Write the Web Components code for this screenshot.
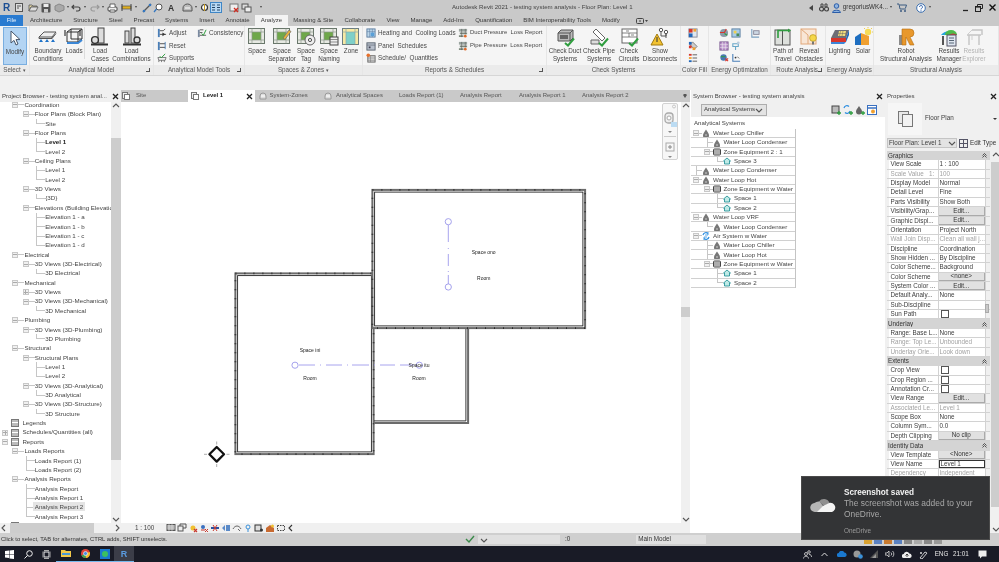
<!DOCTYPE html>
<html>
<head>
<meta charset="utf-8">
<title>Revit</title>
<style>
  html, body { margin: 0; padding: 0; }
  body {
    width: 999px; height: 562px; overflow: hidden;
    font: 6.3px/1 "Liberation Sans", Arial, sans-serif;
    color: #3c3c3c; background: #f0f0f0;
    display: flex; flex-direction: column;
    position: relative;
    filter: blur(0.28px);
  }
</style>
</head>
<body>
<rvt-titlebar title="Autodesk Revit 2021 - testing system analysis - Floor Plan: Level 1"></rvt-titlebar>
<rvt-menu></rvt-menu>
<rvt-ribbon>
  <rvt-panel w="30" label="Select" drop>
    <rvt-tool icon="cursor" w="24" active>Modify</rvt-tool>
  </rvt-panel>
  <rvt-panel w="124" label="Analytical Model" launch>
    <rvt-tool icon="boundary" w="36">Boundary<br>Conditions</rvt-tool>
    <rvt-tool icon="loads" w="16">Loads</rvt-tool>
    <rvt-sep></rvt-sep>
    <rvt-tool icon="loadcase" w="26">Load<br>Cases</rvt-tool>
    <rvt-tool icon="loadcomb" w="37">Load<br>Combinations</rvt-tool>
  </rvt-panel>
  <rvt-panel w="91" label="Analytical Model Tools" launch>
    <rvt-col w="40">
      <rvt-small icon="adjust">Adjust</rvt-small>
      <rvt-small icon="reset">Reset</rvt-small>
      <rvt-small icon="supports">Supports</rvt-small>
    </rvt-col>
    <rvt-col w="50">
      <rvt-small icon="consistency">Consistency</rvt-small>
    </rvt-col>
  </rvt-panel>
  <rvt-panel w="118" label="Spaces &amp; Zones" drop>
    <rvt-tool icon="space" w="24">Space</rvt-tool>
    <rvt-tool icon="separator" w="26">Space<br>Separator</rvt-tool>
    <rvt-tool icon="tag" w="22">Space<br>Tag</rvt-tool>
    <rvt-tool icon="naming" w="24">Space<br>Naming</rvt-tool>
    <rvt-tool icon="zone" w="20">Zone</rvt-tool>
  </rvt-panel>
  <rvt-panel w="184" label="Reports &amp; Schedules" launch>
    <rvt-col w="92">
      <rvt-small icon="heat">Heating and&nbsp; Cooling Loads</rvt-small>
      <rvt-small icon="panel">Panel&nbsp; Schedules</rvt-small>
      <rvt-small icon="sched">Schedule/&nbsp; Quantities</rvt-small>
    </rvt-col>
    <rvt-col w="90" style="font-size:5.9px">
      <rvt-small icon="duct">Duct Pressure&nbsp; Loss Report</rvt-small>
      <rvt-small icon="duct">Pipe Pressure&nbsp; Loss Report</rvt-small>
    </rvt-col>
  </rvt-panel>
  <rvt-panel w="134" label="Check Systems">
    <rvt-tool icon="cduct" w="36">Check Duct<br>Systems</rvt-tool>
    <rvt-tool icon="cpipe" w="32">Check Pipe<br>Systems</rvt-tool>
    <rvt-tool icon="ccircuit" w="28">Check<br>Circuits</rvt-tool>
    <rvt-tool icon="show" w="34">Show<br>Disconnects</rvt-tool>
  </rvt-panel>
  <rvt-panel w="28" label="Color Fill" pad="3.5">
    <rvt-col w="20">
      <rvt-small icon="cf1"></rvt-small>
      <rvt-small icon="cf2"></rvt-small>
      <rvt-small icon="cf3"></rvt-small>
    </rvt-col>
  </rvt-panel>
  <rvt-panel w="62" label="Energy Optimization" pad="6.5">
    <rvt-col w="12">
      <rvt-small icon="eo1"></rvt-small>
      <rvt-small icon="eo3"></rvt-small>
      <rvt-small icon="eo5"></rvt-small>
    </rvt-col>
    <rvt-col w="19">
      <rvt-small icon="eo2"></rvt-small>
      <rvt-small icon="eo4"></rvt-small>
      <rvt-small icon="eo6"></rvt-small>
    </rvt-col>
    <rvt-col w="12">
      <rvt-small icon="eo7"></rvt-small>
    </rvt-col>
  </rvt-panel>
  <rvt-panel w="55" label="Route Analysis" launch>
    <rvt-tool icon="path" w="24">Path of<br>Travel</rvt-tool>
    <rvt-tool icon="reveal" w="28">Reveal<br>Obstacles</rvt-tool>
  </rvt-panel>
  <rvt-panel w="48" label="Energy Analysis">
    <rvt-tool icon="lighting" w="27">Lighting</rvt-tool>
    <rvt-tool icon="solar" w="20">Solar</rvt-tool>
  </rvt-panel>
  <rvt-panel w="125" label="Structural Analysis">
    <rvt-tool icon="robot" w="64">Robot<br>Structural Analysis</rvt-tool>
    <rvt-tool icon="results" w="22">Results<br>Manager</rvt-tool>
    <rvt-tool icon="explorer" w="28" disabled>Results<br>Explorer</rvt-tool>
  </rvt-panel>
</rvt-ribbon>
<rvt-workspace>
  <project-browser></project-browser>
  <view-pane></view-pane>
  <system-browser></system-browser>
  <props-palette></props-palette>
</rvt-workspace>
<status-bar></status-bar>
<task-bar></task-bar>
<toast-note>
  <span slot="head">Screenshot saved</span>
  The screenshot was added to your<br>OneDrive.
  <span slot="app">OneDrive</span>
</toast-note>

<script>
const line = (c, w) => `fill="none" stroke="${c}" stroke-width="${w || 1}"`;
const tick = `<path d="M10 16l3 2.5 6-7" ${line('#2f9e3f', 2)}/>`;
const roomBase = `<rect x="1.5" y="1.5" width="16" height="15" fill="#e6e9e2" stroke="#68766a"/><rect x="5" y="5" width="9" height="8" fill="#6fa84a"/><path d="M1.5 5h16M1.5 13h16M5 1.5v15M14 1.5v15" ${line('#8d9a8d', .7)}/>`;

const ICONS = {
  cursor: `<path d="M6 3v12l3-2.6 2 4.6 2-1-2-4.4h4z" fill="#fff" stroke="#47566a"/>`,
  boundary: `<path d="M6 5h12l-4 5H1z" fill="#eee" stroke="#555"/><path d="M1 10v1.5h13V10M14 11.5l4-5" ${line('#555')}/><path d="M3 12l-2 3h4zM9 12l-2 3h4zM15 12l-2 3h4z" fill="#1f73c8"/>`,
  loads: `<path d="M3 5h11v10H3zM7 2h11v10H7zM3 5l4-3M14 5l4-3M14 15l4-3" ${line('#333')}/><path d="M3 16h11l4-3" ${line('#3b87d6', 2)}/><path d="M1 3v6M16 3v6" ${line('#111')}/>`,
  loadcase: `<rect x="8" y="1" width="6" height="15" fill="#ddd" stroke="#444"/><circle cx="5" cy="13" r="3.4" fill="#ddd" stroke="#333" stroke-width="1.4"/><path d="M1 17.5h17" ${line('#333', 2)}/>`,
  loadcomb: `<rect x="3" y="4" width="4" height="12" fill="#ddd" stroke="#444"/><rect x="9" y="1" width="4" height="15" fill="#ddd" stroke="#444"/><circle cx="15" cy="13" r="3" fill="#ddd" stroke="#333" stroke-width="1.3"/><path d="M1 17.5h18" ${line('#333', 2)}/>`,
  space: roomBase,
  separator: roomBase + `<path d="M11 11l6-8 2 1.5-6 8z" fill="#e8b23a" stroke="#6b6b6b" stroke-width=".7"/>`,
  tag: roomBase + `<circle cx="14" cy="13" r="5" fill="#eee" stroke="#666"/><circle cx="14" cy="13" r="1.6" ${line('#555')}/>`,
  naming: roomBase + `<rect x="11" y="10" width="8" height="8" fill="#eee" stroke="#444"/><path d="M11 12.5h8M11 15h8" ${line('#666', .7)}/>`,
  zone: `<rect x="1.5" y="1.5" width="16" height="16" fill="#f6e9a4" stroke="#6c7d80"/><rect x="5" y="5" width="9" height="12" fill="#7fd0c8"/><path d="M1.5 5h16M5 1.5v16M14 1.5v16" ${line('#8aa', .7)}/>`,
  cduct: `<path d="M3 6l3-3h12v8l-3 3H3z" fill="#bbb" stroke="#555"/><path d="M3 6h12v8M15 6l3-3" ${line('#555')}/><rect x="5" y="8" width="8" height="4" fill="#666"/>` + tick,
  cpipe: `<path d="M7 2l9 9-3 3-9-9z" fill="#fff" stroke="#666"/><path d="M2 13h8v4H2z" fill="#ddd" stroke="#666"/>` + tick,
  ccircuit: `<rect x="3" y="2" width="15" height="14" fill="#fff" stroke="#666"/><path d="M3 6h15M3 10h15M10 6v4M7 4h3M12 8h3" ${line('#666', .8)}/>` + tick,
  show: `<path d="M7 7l6 11H1z" fill="#f2c230" stroke="#a37b10"/><path d="M7 10v5" ${line('#333')}/><path d="M11 9V3M16 11V6" ${line('#555')}/><circle cx="11" cy="3" r="1.7" fill="#fff" stroke="#555"/><circle cx="16" cy="5" r="1.7" fill="#fff" stroke="#555"/><path d="M11 9h5v-3" ${line('#555')}/>`,
  path: `<rect x="2" y="3" width="15" height="15" fill="#dde0dc" stroke="#555"/><path d="M9.5 3v15" ${line('#555')}/><path d="M5 11V3.5h11" ${line('#2f9e3f', 1.6)}/><path d="M15 1.5l3 2-3 2z" fill="#2f9e3f"/>`,
  reveal: `<rect x="2" y="2" width="15" height="15" fill="#f8e6d6" stroke="#e2a87a"/><path d="M2 2l7 6v9" ${line('#e2a87a')}/><circle cx="14" cy="11" r="3.4" fill="#f6d648" stroke="#b49a1e" stroke-width=".7"/><rect x="13" y="14.5" width="2" height="3" fill="#777"/>`,
  lighting: `<path d="M5 3h14l-3 8H1z" fill="#6e6e76"/><path d="M9 4h7l-1 5H8z" fill="#f2dc7a"/><path d="M10.5 4l-1 5M13 4l-1 5M8 6.500h8" ${line('#666', .5)}/><path d="M1 11h15v4H1z" fill="#d8362c"/><path d="M16 11l3-8v5l-3 7z" fill="#2166b8"/><path d="M1 15h15l-2 2H1z" fill="#3d85d8"/>`,
  solar: `<path d="M2 10l6-4v12H2z" fill="#1e6ec0"/><path d="M8 6l8 3v9H8z" fill="#f0a030"/><circle cx="15" cy="5" r="3.200" fill="#f6dc56"/><path d="M15 0v1M20 5h-1M11 1l1 1M19 1l-1 1" ${line('#e8c030', .8)}/>`,
  robot: `<rect x="3" y="8" width="5" height="10" fill="#8a8a8a"/><path d="M6 2h8a4 4 0 0 1 0 8l4 8h-4l-4-8v8H6z" fill="#e8982c" stroke="#b36d10" stroke-width=".6"/>`,
  results: `<path d="M2 8a9 7 0 0 1 16 0z" fill="#27a6de"/><path d="M6 8a6 5 0 0 1 12 0z" fill="#4dbb4a"/><path d="M10 8a5 4 0 0 1 8 0z" fill="#e03c30"/><rect x="3" y="9" width="2" height="9" fill="#555"/><rect x="8" y="8" width="9" height="11" fill="#dfe6f0" stroke="#556"/><path d="M10 11h5M10 13.500h5M10 16h5" ${line('#345', .8)}/>`,
  explorer: `<path d="M3 8h14M5 8v10M15 8v10M8 3h10v5" ${line('#c4c4c4', 1.4)}/><path d="M3 8l5-5M8 8v5" ${line('#cfcfcf')}/>`,

  adjust: `<rect x="1" y="1" width="2" height="9" fill="#4a7fb8"/><path d="M3 3h4l2-2M3 7h7" ${line('#444')}/><path d="M6 5l3 2-3 2z" fill="#333"/>`,
  reset: `<rect x="1" y="1" width="2" height="9" fill="#4a7fb8"/><path d="M3 3h6M3 7h6" ${line('#444')}/><path d="M9 1v8" ${line('#4a7fb8')}/>`,
  supports: `<path d="M1 5h9l-1 3H2zM2 8v2M5 8v2M8 8v2" ${line('#555', .8)}/><path d="M3 4l2 1 4-4" ${line('#2f9e3f', 1.1)}/>`,
  consistency: `<rect x="1" y="2" width="2" height="8" fill="#7a8aa0"/><path d="M3 2h4M3 5h3M3 8h7" ${line('#555')}/><path d="M5 6l2 2 3-6" ${line('#2f9e3f', 1.1)}/>`,
  heat: `<rect x="1" y="1" width="9" height="9" fill="#bcd6ea" stroke="#5e7ea0"/><path d="M1 4h9M4 1v9M7 1v9" ${line('#5e7ea0', .6)}/><rect x="5" y="5" width="4" height="4" fill="#5aa0d8"/>`,
  panel: `<rect x="1" y="2" width="9" height="8" fill="#b8c0cc" stroke="#5a6470"/><path d="M1 4.500h9" ${line('#5a6470', .7)}/><path d="M3 6h2v2H3z" fill="#445"/>`,
  sched: `<rect x="2" y="3" width="8" height="7" fill="#d8d8d8" stroke="#666"/><path d="M2 5.500h8M2 8h8M5 3v7" ${line('#777', .6)}/><circle cx="2.500" cy="2.500" r="2" fill="#e8702a"/>`,
  duct: `<path d="M1 1h9v3H1z" fill="#9aa5a0"/><path d="M2 5h8v2H2zM1 8h5v2H1z" fill="#7e8a7e"/><path d="M4 1v9M8 1v6" ${line('#555', .6)}/><circle cx="8" cy="9" r="1.500" fill="#e06a2a"/>`,
  cf1: `<rect x="1" y="1" width="9" height="9" fill="#dfe7f0" stroke="#889"/><rect x="1" y="1" width="4" height="4" fill="#d8362c"/><rect x="1" y="6" width="4" height="4" fill="#2166b8"/><rect x="6" y="1" width="3" height="3" fill="#f0a030"/>`,
  cf2: `<path d="M2 4l3-3 5 5-3 3z" fill="#ccc" stroke="#777"/><rect x="1" y="1" width="3" height="3" fill="#2166b8"/><rect x="1" y="5" width="3" height="3" fill="#d8362c"/><rect x="5" y="7" width="3" height="3" fill="#f0a030"/>`,
  cf3: `<rect x="1" y="1" width="3" height="2" fill="#d8362c"/><rect x="1" y="4.500" width="3" height="2" fill="#f0a030"/><rect x="1" y="8" width="3" height="2" fill="#2166b8"/><path d="M5 2h5M5 5.500h5M5 9h5" ${line('#444', .9)}/>`,
  eo1: `<circle cx="5.500" cy="5.500" r="4.500" fill="#8a9aa8"/><path d="M1 5h5l2-4" ${line('#d8362c', 1.2)}/><path d="M6 6l3 2" ${line('#2f9e3f', 1.2)}/>`,
  eo2: `<rect x="1" y="1" width="9" height="9" fill="#a8cce8" stroke="#5a7ea0"/><rect x="3" y="3" width="3" height="3" fill="#f0d050"/><rect x="6" y="6" width="3" height="3" fill="#4a8a5a"/>`,
  eo3: `<rect x="1" y="1" width="9" height="9" fill="#c098d0" stroke="#7a5a90"/><path d="M1 4h9M1 7h9M4 1v9M7 1v9" ${line('#eee', .6)}/>`,
  eo4: `<path d="M2 3h6v3H2zM5 6v4" ${line('#6aa8c8', 1.2)}/><circle cx="8" cy="2" r="1.500" fill="#bcd"/>`,
  eo5: `<circle cx="5" cy="5" r="3.500" fill="#4a78b0"/><path d="M7 6l3 3M10 6L7 9" ${line('#d8362c', 1.2)}/><path d="M2 4h5" ${line('#2f9e3f')}/>`,
  eo6: `<path d="M2 1v8h8" ${line('#4a7fb8', 1.2)}/><circle cx="5" cy="5" r="1" fill="#333"/><path d="M7 4l2 2" ${line('#666')}/>`,
  eo7: `<path d="M2 1v9h8" ${line('#7aa0c0', 1.2)}/><rect x="4" y="3" width="6" height="4" fill="#cdd8e4" stroke="#889"/>`
};

const icon = (name, w, h, box) => `<svg width="${w}" height="${h}" viewBox="0 0 ${box} ${box}">${ICONS[name] || ''}</svg>`;
const arrow = (d, c) => {
  const paths = { up: 'M1 5l3-3 3 3', down: 'M1 3l3 3 3-3', left: 'M5 1L2 4l3 3', right: 'M3 1l3 3-3 3' };
  return `<svg width="8" height="8" viewBox="0 0 8 8"><path d="${paths[d]}" fill="none" stroke="${c || '#555'}" stroke-width="1.100"/></svg>`;
};
const closeX = `<svg width="7" height="7" viewBox="0 0 7 7"><path d="M1 1l5 5M6 1L1 6" stroke="#222" stroke-width="1.300"/></svg>`;

const titleTemplate = document.createElement('template');
titleTemplate.innerHTML = `
  <style>
    :host { display: flex; align-items: center; height: 15px; background: #c9c9c9; flex: none; }
    .qat { width: 452px; flex: none; display: flex; align-items: center; padding-left: 3px; box-sizing: border-box; }
    .qat > * { flex: none; margin-right: 2px; }
    .r { font: bold 10px "Liberation Sans", sans-serif; color: #1c4f94; width: 9px; }
    .caret { width: 0; height: 0; border: 1.5px solid transparent; border-top: 2px solid #444; }
    .a { font: bold 8.500px "Liberation Sans", sans-serif; color: #333; width: 8px; text-align: center; }
    .title { font-size: 6.100px; color: #444; white-space: nowrap; }
    .right { margin-left: auto; display: flex; align-items: center; padding-right: 3px; }
    .user { margin: 0 2px; color: #333; font-size: 6.300px; }
    .win { display: flex; align-items: center; gap: 6px; margin-left: 31px; }
  </style>
  <div class="qat">
    <span class="r">R</span>
    <svg width="8" height="9" viewBox="0 0 8 9" style="margin-left:1px"><rect x=".5" y=".5" width="7" height="8" fill="#ddd" stroke="#555"/><path d="M2 3h4M2 5h2" stroke="#555"/></svg>
    <svg width="11" height="9" viewBox="0 0 11 9" style="margin-left:2.500px"><path d="M1 2h3l1 1h4v1H3L1 8z" fill="#e6d9a6" stroke="#555" stroke-width=".8"/><path d="M3 4h7L8 8H1z" fill="#ddd" stroke="#555" stroke-width=".8"/></svg>
    <svg width="10" height="10" viewBox="0 0 10 10" style="margin-left:.5px"><rect x=".5" y=".5" width="9" height="9" rx="1" fill="#555"/><rect x="2.500" y="1" width="5" height="3" fill="#eee"/><rect x="3" y="6" width="4" height="3.500" fill="#ccc"/></svg>
    <svg width="11" height="10" viewBox="0 0 11 10" style="margin-left:.5px"><path d="M1 3l4-2 5 2v4l-5 2-4-2z" fill="#a9a9a9" stroke="#888"/></svg>
    <span class="caret"></span>
    <svg width="11" height="8" viewBox="0 0 11 8"><path d="M3 1L1 3l2 2M1 3h6a2 2 0 0 1 0 4H5" fill="none" stroke="#444" stroke-width="1.200"/></svg>
    <span class="caret"></span>
    <svg width="11" height="8" viewBox="0 0 11 8" style="margin-left:1px"><path d="M8 1l2 2-2 2M10 3H4a2 2 0 0 0 0 4h2" fill="none" stroke="#999" stroke-width="1.200"/></svg>
    <span class="caret"></span>
    <svg width="11" height="10" viewBox="0 0 11 10" style="margin-left:1px"><rect x="1" y="4" width="9" height="4" rx="1" fill="#eee" stroke="#444"/><path d="M3 4V1h5v3M3 7h5v2H3z" fill="#fff" stroke="#444" stroke-width=".8"/></svg>
    <svg width="11" height="9" viewBox="0 0 11 9" style="margin-left:1px"><rect x="1" y="3" width="9" height="3" fill="#e0b020" stroke="#555" stroke-width=".7"/><path d="M1 1v7M10 1v7" stroke="#444"/></svg>
    <span class="caret" style="margin-left:1px"></span>
    <svg width="10" height="10" viewBox="0 0 10 10" style="margin-left:3.500px"><path d="M1 9l8-8" stroke="#555" stroke-width="1.200"/><circle cx="2" cy="8" r="1.300" fill="#3477c0"/><circle cx="8" cy="2" r="1.300" fill="#3477c0"/></svg>
    <svg width="10" height="10" viewBox="0 0 10 10" style="margin-left:-1px"><circle cx="6" cy="4" r="3" fill="#fff" stroke="#555"/><path d="M3.500 6L1 9" stroke="#3477c0" stroke-width="1.300"/></svg>
    <span class="a" style="margin-left:2px">A</span>
    <svg width="11" height="10" viewBox="0 0 11 10" style="margin-left:4.500px"><path d="M1 5a4.500 4 0 0 1 9 0v3H1z" fill="#bbb" stroke="#555"/><path d="M3 5h5" stroke="#fff"/></svg>
    <span class="caret"></span>
    <svg width="9" height="9" viewBox="0 0 9 9" style="margin-left:1px"><circle cx="4.500" cy="4.500" r="3" fill="#fff" stroke="#333" stroke-width="1.200"/><path d="M4.500 1v7" stroke="#c89c20"/></svg>
    <svg width="12" height="11" viewBox="0 0 12 11" style="margin-left:-.5px"><rect x=".5" y=".5" width="11" height="10" fill="#b8d8f2" stroke="#3f86c6"/><path d="M2 3h3M2 5.500h3M2 8h3M7 3h3M7 5.500h3M7 8h3" stroke="#246"/></svg>
    <svg width="10" height="10" viewBox="0 0 10 10" style="margin-left:5px"><rect x="1" y="1" width="8" height="7" fill="#eee" stroke="#777"/><path d="M5 5l4 4M9 5L5 9" stroke="#d02a20" stroke-width="1.300"/></svg>
    <svg width="11" height="10" viewBox="0 0 11 10" style="margin-left:-.5px"><rect x="1" y="1" width="6" height="5" fill="#ddd" stroke="#555"/><rect x="4" y="4" width="6" height="5" fill="#eee" stroke="#555"/></svg>
    <span class="caret" style="margin-left:6px"></span>
  </div>
  <span class="title"></span>
  <div class="right">
    <svg width="5" height="6" viewBox="0 0 5 6" style="margin-right:5px"><path d="M4 0v6L0 3z" fill="#444"/></svg>
    <svg width="10" height="9" viewBox="0 0 10 9"><path d="M2 1h2v3H2zM6 1h2v3H6z" fill="none" stroke="#444"/><circle cx="2.500" cy="6" r="2" fill="none" stroke="#444" stroke-width="1.200"/><circle cx="7.500" cy="6" r="2" fill="none" stroke="#444" stroke-width="1.200"/></svg>
    <svg width="9" height="10" viewBox="0 0 9 10" style="margin-left:3px"><circle cx="4.500" cy="3" r="2.300" fill="#8fb4e0" stroke="#2a5ca8"/><path d="M.5 9.500c0-3 8-3 8 0z" fill="#8fb4e0" stroke="#2a5ca8"/></svg>
    <span class="user">gregoriusWK4...</span>
    <span class="caret"></span>
    <svg width="10" height="9" viewBox="0 0 10 9" style="margin-left:5px"><path d="M0 1h2l1 5h6M3 2h6.500l-1 3" fill="none" stroke="#3b5a80"/><circle cx="4" cy="8" r="1" fill="#3b5a80"/><circle cx="8" cy="8" r="1" fill="#3b5a80"/></svg>
    <svg width="10" height="10" viewBox="0 0 10 10" style="margin-left:9px"><circle cx="5" cy="5" r="4.300" fill="#fff" stroke="#3b6fb0"/><path d="M3.500 4a1.500 1.500 0 1 1 2 1.400c-.5.200-.5.600-.5 1.100" fill="none" stroke="#2a5ca8" stroke-width=".9"/><circle cx="5" cy="7.800" r=".6" fill="#2a5ca8"/></svg>
    <span class="caret" style="margin-left:3px"></span>
    <div class="win">
      <svg width="7" height="8" viewBox="0 0 7 8"><path d="M1 6.500h5" stroke="#222" stroke-width="1.300"/></svg>
      <svg width="8" height="8" viewBox="0 0 8 8"><path d="M2.500 2V.5h5v4H6" fill="none" stroke="#222"/><rect x=".5" y="2.500" width="5" height="5" fill="none" stroke="#222"/><path d="M.5 3h5" stroke="#222" stroke-width="1.200"/></svg>
      <svg width="7" height="7" viewBox="0 0 7 7"><path d="M.5.500l6 6M6.500.500l-6 6" stroke="#111" stroke-width="1.400"/></svg>
    </div>
  </div>
`;
class RvtTitlebar extends HTMLElement {
  connectedCallback() {
    const root = this.attachShadow({ mode: 'open' });
    root.appendChild(titleTemplate.content.cloneNode(true));
    root.querySelector('.title').textContent = this.getAttribute('title');
    this.removeAttribute('title');
  }
}
customElements.define('rvt-titlebar', RvtTitlebar);

const menuTemplate = document.createElement('template');
menuTemplate.innerHTML = `
  <style>
    :host { display: flex; height: 11px; background: #c9c9c9; flex: none; font-size: 6.050px; align-items: stretch; }
    span { padding: 0 5.500px; display: flex; align-items: center; white-space: nowrap; color: #3b3b3b; }
    .file { background: #2a7bd0; color: #e6f0fb; width: 23px; padding: 0; justify-content: center; margin-right: 1.500px; }
    .on { background: #f3f3f3; }
    svg { margin-left: 11px; align-self: center; }
  </style>
  <span class="file">File</span>
  <span>Architecture</span><span>Structure</span><span>Steel</span><span>Precast</span><span>Systems</span><span>Insert</span><span>Annotate</span>
  <span class="on">Analyze</span>
  <span>Massing &amp; Site</span><span>Collaborate</span><span>View</span><span>Manage</span><span>Add-Ins</span><span>Quantification</span><span>BIM Interoperability Tools</span><span>Modify</span>
  <svg width="12" height="6" viewBox="0 0 12 6"><rect x=".5" y=".5" width="7" height="5" rx="1" fill="none" stroke="#444"/><path d="M3 3h2" stroke="#444"/><path d="M9 2h3l-1.500 2z" fill="#444"/></svg>
`;
class RvtMenu extends HTMLElement {
  connectedCallback() {
    this.attachShadow({ mode: 'open' }).appendChild(menuTemplate.content.cloneNode(true));
  }
}
customElements.define('rvt-menu', RvtMenu);

const ribbonTemplate = document.createElement('template');
ribbonTemplate.innerHTML = `
  <style>
    :host { display: block; flex: none; background: #f1f1f1; height: 64px; }
    .panels { display: flex; height: 49px; background: #f5f5f5; border-bottom: 1px solid #d6d6d6; box-sizing: content-box; }
  </style>
  <div class="panels"><slot></slot></div>
`;
class RvtRibbon extends HTMLElement {
  connectedCallback() {
    this.attachShadow({ mode: 'open' }).appendChild(ribbonTemplate.content.cloneNode(true));
  }
}
customElements.define('rvt-ribbon', RvtRibbon);

const panelTemplate = document.createElement('template');
panelTemplate.innerHTML = `
  <style>
    :host { display: flex; flex-direction: column; flex: none; box-sizing: border-box; border-right: 1px solid #e6e6e6; height: 49px; }
    .body { display: flex; height: 39px; align-items: flex-start; }
    .foot { height: 10px; background: #ebebeb; display: grid; grid-template-columns: 1fr auto 1fr; align-items: center; color: #555; white-space: nowrap; }
    .label { grid-column: 2; }
    .launch { grid-column: 3; justify-self: end; width: 3px; height: 3px; margin-right: 3px; border-right: 1px solid #555; border-bottom: 1px solid #555; }
    .drop { font-size: 5px; margin-left: 2px; }
  </style>
  <div class="body"><slot></slot></div>
  <div class="foot"><span class="label"></span></div>
`;
class RvtPanel extends HTMLElement {
  connectedCallback() {
    const root = this.attachShadow({ mode: 'open' });
    root.appendChild(panelTemplate.content.cloneNode(true));
    this.style.width = this.getAttribute('w') + 'px';
    root.querySelector('.body').style.paddingLeft = (this.getAttribute('pad') || 0) + 'px';
    const label = root.querySelector('.label');
    label.textContent = this.getAttribute('label');
    if (this.hasAttribute('drop')) label.insertAdjacentHTML('beforeend', '<span class="drop">▾</span>');
    if (this.hasAttribute('launch')) root.querySelector('.foot').insertAdjacentHTML('beforeend', '<span class="launch"></span>');
  }
}
customElements.define('rvt-panel', RvtPanel);

const toolTemplate = document.createElement('template');
toolTemplate.innerHTML = `
  <style>
    :host { display: flex; flex-direction: column; align-items: center; flex: none; box-sizing: border-box; padding-top: 1px; height: 39px; line-height: 8px; text-align: center; white-space: nowrap; color: #454545; }
    :host([active]) { background: #b3d4f3; border: 1px solid #79aee0; margin: 1px 0 0 3px; height: 38px; padding-top: 0; }
    :host([disabled]) { color: #b4b4b4; }
    .ic { display: flex; flex: none; width: 20px; height: 20px; }
    .lbl { flex: none; }
  </style>
  <span class="ic"></span>
  <div class="lbl"><slot></slot></div>
`;
class RvtTool extends HTMLElement {
  connectedCallback() {
    const root = this.attachShadow({ mode: 'open' });
    root.appendChild(toolTemplate.content.cloneNode(true));
    this.style.width = this.getAttribute('w') + 'px';
    root.querySelector('.ic').innerHTML = icon(this.getAttribute('icon'), 20, 20, 20);
  }
}
customElements.define('rvt-tool', RvtTool);

const colTemplate = document.createElement('template');
colTemplate.innerHTML = `
  <style>:host { display: flex; flex-direction: column; flex: none; padding-top: 1px; }</style>
  <slot></slot>
`;
class RvtCol extends HTMLElement {
  connectedCallback() {
    this.attachShadow({ mode: 'open' }).appendChild(colTemplate.content.cloneNode(true));
    this.style.width = this.getAttribute('w') + 'px';
  }
}
customElements.define('rvt-col', RvtCol);

const smallTemplate = document.createElement('template');
smallTemplate.innerHTML = `
  <style>
    :host { display: flex; align-items: center; gap: 2px; height: 12.500px; padding-left: 3px; white-space: nowrap; color: #484848; }
    .ic { display: flex; flex: none; width: 10px; height: 10px; }
  </style>
  <span class="ic"></span><slot></slot>
`;
class RvtSmall extends HTMLElement {
  connectedCallback() {
    const root = this.attachShadow({ mode: 'open' });
    root.appendChild(smallTemplate.content.cloneNode(true));
    root.querySelector('.ic').innerHTML = icon(this.getAttribute('icon'), 10, 10, 11);
  }
}
customElements.define('rvt-small', RvtSmall);

class RvtSep extends HTMLElement {
  connectedCallback() {
    this.attachShadow({ mode: 'open' }).innerHTML = `<style>:host { display: block; flex: none; width: 5px; height: 36px; background: linear-gradient(#dcdcdc, #dcdcdc) 2px 1px / 1px 32px no-repeat; }</style>`;
  }
}
customElements.define('rvt-sep', RvtSep);

const workspaceTemplate = document.createElement('template');
workspaceTemplate.innerHTML = `
  <style>
    :host { display: grid; grid-template-columns: 121px 569px 195px 114px; flex: 1; height: 443px; min-height: 0; background: #c9c9c9; }
  </style>
  <slot></slot>
`;
class RvtWorkspace extends HTMLElement {
  connectedCallback() {
    this.attachShadow({ mode: 'open' }).appendChild(workspaceTemplate.content.cloneNode(true));
  }
}
customElements.define('rvt-workspace', RvtWorkspace);

/* scrollbars: attributes before, size are thumb offset and length */
class RvtScroll extends HTMLElement {
  connectedCallback() {
    const root = this.attachShadow({ mode: 'open' });
    const h = this.hasAttribute('horizontal');
    root.innerHTML = `
      <style>
        :host { display: flex; flex: none; background: #f0f0f0; flex-direction: ${h ? 'row' : 'column'}; align-items: center; ${h ? 'height:10px' : 'width:9px'}; }
        svg { flex: none; }
        .thumb { flex: none; background: #cdcdcd; align-self: stretch; }
        .gap { flex: 1; }
      </style>
      ${arrow(h ? 'left' : 'up')}
      <div class="thumb" style="${h ? 'width' : 'height'}:${this.getAttribute('size')}px;${h ? 'margin-left' : 'margin-top'}:${this.getAttribute('before')}px"></div>
      <div class="gap"></div>
      ${arrow(h ? 'right' : 'down')}
    `;
  }
}
customElements.define('rvt-scroll', RvtScroll);

const titleRowTemplate = document.createElement('template');
titleRowTemplate.innerHTML = `
  <style>
    :host { display: flex; align-items: center; justify-content: space-between; height: 12px; background: #f0f0f0; padding: 0 2px 0 2px; flex: none; white-space: nowrap; color: #444; font-size: 6.050px; }
    svg { flex: none; }
  </style>
  <slot></slot>${closeX}
`;
class PaneTitle extends HTMLElement {
  connectedCallback() {
    this.attachShadow({ mode: 'open' }).appendChild(titleRowTemplate.content.cloneNode(true));
  }
}
customElements.define('pane-title', PaneTitle);

const projectRows = `1-Coordination
2-Floor Plans (Block Plan)
3lSite
2-Floor Plans
3t*Level 1
3lLevel 2
2-Ceiling Plans
3tLevel 1
3lLevel 2
2-3D Views
3l{3D}
2-Elevations (Building Elevation)
3tElevation 1 - a
3tElevation 1 - b
3tElevation 1 - c
3lElevation 1 - d
1-Electrical
2-3D Views (3D-Electrical)
3l3D Electrical
1-Mechanical
2+3D Views
2-3D Views (3D-Mechanical)
3l3D Mechanical
1-Plumbing
2-3D Views (3D-Plumbing)
3l3D Plumbing
1-Structural
2-Structural Plans
3tLevel 1
3lLevel 2
2-3D Views (3D-Analytical)
3l3D Analytical
2-3D Views (3D-Structure)
3l3D Structure
0iLegends
0+Schedules/Quantities (all)
0-Reports
1-Loads Reports
2tLoads Report (1)
2lLoads Report (2)
1-Analysis Reports
2tAnalysis Report
2tAnalysis Report 1
2s
2lAnalysis Report 3
0+Sheets (all)`.split('\n');

const treeCss = `
  .row { display: flex; align-items: center; height: 9.360px; white-space: nowrap; color: #444; font-size: 6.200px; }
  .in { flex: none; width: 10.400px; align-self: stretch; }
  .c { flex: none; width: 14px; align-self: stretch; display: flex; align-items: center; }
  .t { background: linear-gradient(#c6c6c6,#c6c6c6) 5px 0 / 1px 100% no-repeat, linear-gradient(#c6c6c6,#c6c6c6) 5px 50% / 9px 1px no-repeat; }
  .l { background: linear-gradient(#c6c6c6,#c6c6c6) 5px 0 / 1px 50% no-repeat, linear-gradient(#c6c6c6,#c6c6c6) 5px 50% / 9px 1px no-repeat; }
  .m { background: linear-gradient(#c6c6c6,#c6c6c6) 8px 50% / 6px 1px no-repeat; }
  .box { width: 6px; height: 6px; margin-left: 2px; box-sizing: border-box; border: 1px solid #c8c8c8; background: #f0f0f0 linear-gradient(#aaa,#aaa) center / 4px 1px no-repeat; }
  .box.plus { background: #f0f0f0 linear-gradient(#aaa,#aaa) center / 4px 1px no-repeat; }
  .box.plus::after { content: ""; display: block; width: 1px; height: 4px; margin: 0 auto; background: #aaa; }
  b { font-weight: bold; color: #222; }
  .sel { background: #e4e4e4; margin-left: -2px; padding: 1px 2px; }
`;

const browserTemplate = document.createElement('template');
browserTemplate.innerHTML = `
  <style>
    :host { display: flex; flex-direction: column; min-height: 0; overflow: hidden; background: #fff; width: 121px; }
    .mid { display: flex; height: 421px; flex: none; }
    .tree { width: 111px; flex: none; overflow: hidden; }
    .list { margin-top: -1.700px; }
    .ticon { flex: none; width: 8px; height: 8px; margin: 0 3px 0 1px; box-sizing: border-box; border: 1px solid #777; background: #bbb linear-gradient(#fff,#fff) 0 2px / 100% 1px no-repeat; }
    .top { width: 10.400px; flex: none; align-self: stretch; display: flex; align-items: center; }
    ${treeCss}
    rvt-scroll { height: 421px; width: 10px; }
    rvt-scroll[horizontal] { height: 10px; width: auto; }
  </style>
  <pane-title>Project Browser - testing system anal...</pane-title>
  <div class="mid">
    <div class="tree"><div class="list"></div></div>
    <rvt-scroll before="28" size="322"></rvt-scroll>
  </div>
  <rvt-scroll horizontal before="2" size="84"></rvt-scroll>
`;
class ProjectBrowser extends HTMLElement {
  connectedCallback() {
    const root = this.attachShadow({ mode: 'open' });
    root.appendChild(browserTemplate.content.cloneNode(true));
    root.querySelector('.list').innerHTML = projectRows.map(line => {
      const lvl = +line[0];
      const kind = line[1];
      let text = line.slice(2);
      if (kind === 's') return rowHtml(2, 't', '<span class="sel">Analysis Report 2</span>');
      if (text[0] === '*') text = `<b>${text.slice(1)}</b>`;
      if (lvl === 0) {
        const box = kind === 'i' ? '' : `<span class="box ${kind === '+' ? 'plus' : ''}"></span>`;
        return `<div class="row"><span class="top">${box}</span><span class="ticon"></span>${text}</div>`;
      }
      return rowHtml(lvl, kind, text);
    }).join('');
  }
}
function rowHtml(lvl, kind, text) {
  const indent = '<span class="in"></span>'.repeat(lvl);
  let cell;
  if (kind === '-') cell = '<span class="c m"><span class="box"></span></span>';
  else if (kind === '+') cell = '<span class="c m"><span class="box plus"></span></span>';
  else cell = `<span class="c ${kind}"></span>`;
  return `<div class="row">${indent}${cell}<span>${text}</span></div>`;
}
customElements.define('project-browser', ProjectBrowser);

const viewTemplate = document.createElement('template');
viewTemplate.innerHTML = `
  <style>
    :host { display: flex; flex-direction: column; min-width: 0; position: relative; background: #fff; }
    .tabs { display: flex; height: 12px; flex: none; background: #c9c9c9; align-items: stretch; white-space: nowrap; color: #555; font-size: 5.950px; }
    .tab { display: flex; align-items: center; }
    .tab svg { flex: none; }
    .on { background: #fff; color: #222; font-weight: bold; }
    .on svg:last-child { margin-left: auto; margin-right: 2px; }
    .caret { margin-left: auto; margin-right: 3px; align-self: center; border: 2px solid transparent; border-top: 3px solid #555; margin-top: 3px; box-shadow: 0 -1.500px 0 -.5px #555; }
    .mid { display: flex; height: 421px; flex: none; }
    .canvas { flex: 1; min-width: 0; }
    rvt-scroll { height: 421px; }
    .foot { display: flex; align-items: center; height: 10px; flex: none; background: #f0f0f0; padding-left: 14px; color: #444; }
    .bar { display: flex; align-items: center; margin-left: 12px; gap: 1px; }
    .bar svg { flex: none; }
    svg text { font: 5px "Liberation Sans", sans-serif; fill: #222; text-anchor: middle; }
    .nav { position: absolute; left: 541px; top: 13px; width: 16px; height: 57px; box-sizing: border-box; border: 1px solid #d2d2d2; border-radius: 2px; background: #f7f7f7; display: flex; flex-direction: column; align-items: center; }
  </style>
  <div class="tabs"></div>
  <div class="mid">
    <div class="canvas"></div>
    <rvt-scroll before="197" size="10"></rvt-scroll>
  </div>
  <div class="foot">
    <span>1 : 100</span>
    <div class="bar"></div>
  </div>
  <div class="nav">
    <svg width="14" height="5" viewBox="0 0 14 5"><circle cx="11" cy="2.500" r="1.500" fill="none" stroke="#bbb" stroke-width=".8"/></svg>
    <svg width="14" height="16" viewBox="0 0 14 16" style="margin-top:3px"><rect x="2" y="1" width="8" height="10" rx="3" fill="#eee" stroke="#aaa" stroke-width="1.300"/><circle cx="6" cy="6" r="2" fill="#fff" stroke="#aaa"/><rect x="8" y="10" width="6" height="5" fill="#bcdcf3"/></svg>
    <svg width="6" height="4" viewBox="0 0 6 4" style="margin-top:2px"><path d="M1 1h4L3 3z" fill="#888"/></svg>
    <svg width="12" height="1" viewBox="0 0 12 1" style="margin-top:2px"><path d="M0 .5h12" stroke="#ccc"/></svg>
    <svg width="12" height="11" viewBox="0 0 12 11" style="margin-top:5px"><rect x="2" y="1" width="8" height="8" fill="none" stroke="#aaa"/><path d="M6 3v4M4 5h4" stroke="#888"/></svg>
    <svg width="6" height="4" viewBox="0 0 6 4" style="margin-top:2px"><path d="M1 1h4L3 3z" fill="#888"/></svg>
  </div>
`;
const tabIcon = `<svg width="8" height="8" viewBox="0 0 8 8"><rect x=".5" y=".5" width="5" height="6" fill="#eee" stroke="#777"/><rect x="2.500" y="2.500" width="5" height="5" fill="#fff" stroke="#777"/></svg>`;
const houseIcon = `<svg width="8" height="8" viewBox="0 0 8 8"><path d="M1 4a3 3 0 0 1 6 0v3H1z" fill="#ddd" stroke="#999"/><path d="M2 4h4" stroke="#fff"/></svg>`;
const wall = (x0, y0, x1, y1) => {
  const r = (i, rest) => `<rect x="${x0 + i}" y="${y0 + i}" width="${x1 - x0 - 2 * i}" height="${y1 - y0 - 2 * i}" ${rest}/>`;
  return r(0.9, 'fill="#fff" stroke="#6b6b6b" stroke-width="2"') +
    r(0.9, 'fill="none" stroke="#2c2c2c" stroke-width="1.800" stroke-dasharray="1 8"') +
    r(3.1, 'fill="none" stroke="#222" stroke-width=".9"');
};
const planSvg = `
<svg width="560" height="421" viewBox="121 102 560 421" style="display:block">
  ${wall(234.5, 272.5, 374.5, 455)}
  <path d="M468.100 329V423.100H374" fill="none" stroke="#6b6b6b" stroke-width="2"/>
  <path d="M465.900 329V420.900H374" fill="none" stroke="#222" stroke-width=".9"/>
  ${wall(371.500, 189, 586, 329)}
  <path d="M448.300 225V242M448.300 248v1M448.300 254v12M448.300 271v1M448.300 275v9" fill="none" stroke="#a8a4ee"/>
  <circle cx="448.300" cy="221.700" r="3.100" fill="#fff" stroke="#9b97ea" stroke-width=".9"/>
  <circle cx="448.300" cy="287" r="3.100" fill="#fff" stroke="#9b97ea" stroke-width=".9"/>
  <path d="M299 365h16M320 365h1M326 365h16M347 365h1M352 365h17M374 365h1M380 365h15M400 365h14" fill="none" stroke="#a8a4ee"/>
  <circle cx="295" cy="365.200" r="3.100" fill="#fff" stroke="#9b97ea" stroke-width=".9"/>
  <circle cx="419.300" cy="365.200" r="3.100" fill="#fff" stroke="#9b97ea" stroke-width=".9"/>
  <text x="483.700" y="253.800">Space ono</text>
  <text x="483.700" y="279.500">Room</text>
  <text x="310" y="352.300">Space ini</text>
  <text x="310" y="379.700">Room</text>
  <text x="419" y="366.700">Space itu</text>
  <text x="419" y="379.700">Room</text>
  <path d="M216.700 447l7.300 7.300-7.300 7.300-7.300-7.300z" fill="#fff" stroke="#111" stroke-width="2.300" stroke-linejoin="round"/>
  <path d="M216.700 441.500v3M216.700 464v3M204 454.300h3M226.500 454.300h3" stroke="#888" stroke-width=".7"/>
</svg>`;
class ViewPane extends HTMLElement {
  connectedCallback() {
    const root = this.attachShadow({ mode: 'open' });
    root.appendChild(viewTemplate.content.cloneNode(true));
    const tabs = [
      ['Site', 67, tabIcon, 1, 6], ['Level 1', 66.500, tabIcon, 3, 4, true], ['System-Zones', 65.500, houseIcon, 4, 3],
      ['Analytical Spaces', 71, houseIcon, 4, 4], ['Loads Report (1)', 61, '', 8, 0], ['Analysis Report', 59, '', 8, 0],
      ['Analysis Report 1', 63, '', 8, 0], ['Analysis Report 2', 60, '', 8, 0]
    ];
    root.querySelector('.tabs').innerHTML = tabs.map(([text, w, ic, pad, gap, on]) =>
      `<div class="tab ${on ? 'on' : ''}" style="width:${w}px;box-sizing:border-box;padding-left:${pad}px;gap:${gap}px">${ic}${text}${on ? closeX : ''}</div>`
    ).join('') + '<span class="caret"></span>';
    root.querySelector('.canvas').innerHTML = planSvg;
    const shapes = ['<rect x="1" y="1.500" width="8" height="6" fill="#aaa" stroke="#555"/><path d="M1 3h8M1 5h8M3 1v7M6 1v7" stroke="#eee" stroke-width=".5"/>',
      '<rect x="1" y="3" width="5" height="5" fill="#eee" stroke="#555"/><path d="M3 3V1h6v4H6" fill="none" stroke="#555"/>',
      '<circle cx="5" cy="5" r="2.500" fill="#f0c030"/><path d="M6 6l3 3M9 6L6 9" stroke="#c83a30" stroke-width="1.200"/>',
      '<circle cx="4" cy="4" r="2" fill="#3a70c0"/><path d="M2 7h4M6 6l3 3M9 6L6 9" stroke="#c83a30"/>',
      '<path d="M1 5h8" stroke="#2a50a0" stroke-width="2"/><path d="M3 2l4 6M7 2L3 8" stroke="#c83a30"/>',
      '<path d="M1 5l3-3v6zM5 2h4v6H5z" fill="#5a8ac8"/>',
      '<path d="M1 6c2-4 6-4 8 0M6 6l2 2" fill="none" stroke="#666"/>',
      '<circle cx="5" cy="4" r="2" fill="none" stroke="#3a90d8"/><path d="M5 6v3" stroke="#3a90d8"/>',
      '<rect x="1" y="2" width="6" height="6" fill="#ddd" stroke="#333"/><circle cx="7.500" cy="7" r="1.500" fill="#333"/>',
      '<path d="M1 5l4-3 4 3v4H1z" fill="#c86a30"/><circle cx="7.500" cy="3" r="1.500" fill="#f0c030"/>',
      '<rect x="1.500" y="2.500" width="7" height="5" fill="#eee" stroke="#444" stroke-dasharray="1.500 1"/>'];
    root.querySelector('.bar').innerHTML = shapes.map(s => `<svg width="10" height="10" viewBox="0 0 10 10">${s}</svg>`).join('') + arrow('left', '#333');
  }
}
customElements.define('view-pane', ViewPane);

const systemRows = [
  [1, '-', 'drop', 'Water Loop Chiller'],
  [2, 't', 'drop', 'Water Loop Condenser'],
  [2, '-', 'unit', 'Zone Equipment 2 : 1'],
  [3, 'l', 'room', 'Space 3'],
  [1, 't', 'drop', 'Water Loop Condenser'],
  [1, '-', 'drop', 'Water Loop Hot'],
  [2, '-', 'unit', 'Zone Equipment w Water'],
  [3, 't', 'room', 'Space 1'],
  [3, 'l', 'room', 'Space 2'],
  [1, '-', 'drop', 'Water Loop VRF'],
  [2, 'l', 'drop', 'Water Loop Condenser'],
  [1, '-', 'air', 'Air System w Water'],
  [2, 't', 'drop', 'Water Loop Chiller'],
  [2, 't', 'drop', 'Water Loop Hot'],
  [2, '-', 'unit', 'Zone Equipment w Water'],
  [3, 't', 'room', 'Space 1'],
  [3, 'l', 'room', 'Space 2']
];
const sysIcons = {
  drop: `<path d="M4 .5c2 3 3 4 3 6a3 3 0 0 1-6 0c0-2 1-3 3-6z" fill="#777"/><path d="M3 6h2" stroke="#ccc"/>`,
  unit: `<rect x=".5" y="1" width="7" height="6" rx="1" fill="#ddd" stroke="#444"/><path d="M1 3h6M1 5h6" stroke="#555" stroke-width=".7"/>`,
  room: `<path d="M4 1l3.500 3H6.500v3h-5V4H.5z" fill="#bfeae6" stroke="#178a90" stroke-width=".8"/>`,
  air: `<path d="M1 3a3 3 0 0 1 5-1.500M7 5a3 3 0 0 1-5 1.500" fill="none" stroke="#2f8fe0" stroke-width="1.200"/><path d="M6 0v3H3M2 8V5h3" fill="none" stroke="#2f8fe0" stroke-width=".8"/>`
};
const systemTemplate = document.createElement('template');
systemTemplate.innerHTML = `
  <style>
    :host { display: flex; flex-direction: column; background: #fff; min-width: 0; padding-left: 1px; box-sizing: border-box; }
    .tools { display: flex; align-items: center; height: 15px; background: #f0f0f0; flex: none; padding-left: 10px; }
    .dd { width: 66px; height: 12px; box-sizing: border-box; border: 1px solid #adadad; background: #e3e3e3; display: flex; align-items: center; justify-content: space-between; padding: 0 3px 0 2px; white-space: nowrap; font-size: 6.100px; }
    .dd svg { flex: none; }
    .acts { margin-left: auto; display: flex; gap: 2px; padding-right: 8px; }
    .head { height: 12px; display: flex; align-items: center; padding-left: 3px; color: #444; font-size: 6.100px; }
    .tree { width: 105px; box-sizing: border-box; border-right: 1px solid #c4c4c4; }
    ${treeCss}
    .row { border-bottom: 1px solid #d0d0d0; box-sizing: border-box; height: 9.350px; }
    .in { width: 10.500px; }
    .ico { flex: none; width: 9px; margin-right: 2px; display: flex; }
    .c { width: 11px; }
  </style>
  <pane-title>System Browser - testing system analysis</pane-title>
  <div class="tools">
    <div class="dd">Analytical Systems ${arrow('down')}</div>
    <div class="acts">
      <svg width="10" height="10" viewBox="0 0 10 10"><rect x="1" y="1" width="7" height="7" fill="#bbb" stroke="#444"/><path d="M6 8h4M8 6v4" stroke="#2f9e3f" stroke-width="1.300"/></svg>
      <svg width="10" height="10" viewBox="0 0 10 10"><path d="M1 3a3 3 0 0 1 5-1.500M7 6a3 3 0 0 1-5 1.500" fill="none" stroke="#2f8fe0" stroke-width="1.200"/><path d="M6 8h4M8 6v4" stroke="#2f9e3f" stroke-width="1.300"/></svg>
      <svg width="10" height="10" viewBox="0 0 10 10"><path d="M4 1c2 3 3 4 3 5.500a3 3 0 0 1-6 0C1 5 2 4 4 1z" fill="#666"/><path d="M6 8h4M8 6v4" stroke="#2f9e3f" stroke-width="1.300"/></svg>
      <svg width="10" height="10" viewBox="0 0 10 10"><rect x=".5" y=".5" width="9" height="9" fill="#fff" stroke="#3a70c0"/><path d="M.5 3h9" stroke="#3a70c0" stroke-width="1.500"/><circle cx="6" cy="6.500" r="2" fill="#f0a030"/></svg>
    </div>
  </div>
  <div class="head">Analytical Systems</div>
  <div class="tree"></div>
`;
class SystemBrowser extends HTMLElement {
  connectedCallback() {
    const root = this.attachShadow({ mode: 'open' });
    root.appendChild(systemTemplate.content.cloneNode(true));
    root.querySelector('.tree').innerHTML = systemRows.map(([lvl, kind, ic, text]) => {
      const indent = '<span class="in"></span>'.repeat(lvl - 1);
      const cell = kind === '-'
        ? '<span class="c m"><span class="box"></span></span>'
        : `<span class="c ${kind}"></span>`;
      return `<div class="row">${indent}${cell}<span class="ico"><svg width="8" height="8" viewBox="0 0 8 8">${sysIcons[ic]}</svg></span>${text}</div>`;
    }).join('');
  }
}
customElements.define('system-browser', SystemBrowser);

const propRows = `h|Graphics
View Scale|1 : 100
g|Scale Value   1:|100
Display Model|Normal
Detail Level|Fine
Parts Visibility|Show Both
e|Visibility/Grap...|Edit...
e|Graphic Displ...|Edit...
Orientation|Project North
g|Wall Join Disp...|Clean all wall j...
Discipline|Coordination
Show Hidden ...|By Discipline
Color Scheme...|Background
e|Color Scheme|<none>
e|System Color ...|Edit...
Default Analy...|None
Sub-Discipline|
c|Sun Path|
h|Underlay
Range: Base L...|None
g|Range: Top Le...|Unbounded
g|Underlay Orie...|Look down
h|Extents
c|Crop View|
c|Crop Region ...|
c|Annotation Cr...|
e|View Range|Edit...
g|Associated Le...|Level 1
Scope Box|None
Column Sym...|0.0
e|Depth Clipping|No clip
h|Identity Data
e|View Template|<None>
i|View Name|Level 1
g|Dependency|Independent`.split('\n');
const propsTemplate = document.createElement('template');
propsTemplate.innerHTML = `
  <style>
    :host { display: flex; flex-direction: column; background: #f0f0f0; min-width: 0; position: relative; }
    .type { display: flex; align-items: center; height: 33px; flex: none; padding-left: 3px; box-sizing: border-box; }
    .pic { width: 34px; height: 32px; background: #f6f6f6; display: flex; align-items: center; justify-content: center; margin-right: 3px; flex: none; }
    .type .caret { margin-left: auto; margin-right: 2px; border: 2px solid transparent; border-top: 2.500px solid #333; margin-top: 3px; }
    .sel { display: flex; align-items: center; height: 16px; flex: none; padding-left: 2px; }
    .dd { width: 70px; height: 10px; box-sizing: border-box; background: #e3e3e3; border: 1px solid #c4c4c4; display: flex; align-items: center; justify-content: space-between; padding-left: 1px; white-space: nowrap; }
    .dd svg { flex: none; }
    .et { display: flex; align-items: center; gap: 2px; margin-left: 2px; color: #333; white-space: nowrap; }
    .mid { display: flex; flex: 1; min-height: 0; }
    .grid { width: 103px; margin-left: 2px; flex: none; overflow: hidden; }
    rvt-scroll { margin-left: 1px; }
    .r { display: grid; grid-template-columns: 48.500px 48.500px; height: 9.360px; box-sizing: border-box; background: #f0f0f0; align-items: stretch; border-bottom: 1px solid #d2d2d2; padding-left: 2px; width: 103px; }
    .r > span { display: flex; align-items: center; white-space: nowrap; overflow: hidden; background: #fff; padding-left: 1.500px; }
    .r > span + span { border-left: 1px solid #d2d2d2; border-right: 1px solid #d2d2d2; padding-left: 1px; }
    .g > span { color: #a2a2a2; }
    .h { background: #d4d4d4; display: flex; align-items: center; justify-content: space-between; padding: 0 3px 0 0; color: #333; border: 0; }
    .btn { justify-content: center; padding: 0 !important; }
    .btn i { font-style: normal; display: flex; align-items: center; justify-content: center; width: 100%; height: 100%; background: #e1e1e1; border-right: 1px solid #aaa; border-bottom: 1px solid #aaa; box-sizing: border-box; color: #333; }
    .check i { display: block; width: 6px; height: 6px; border: 1px solid #555; background: #fff; margin-left: 1px; }
    .input { padding: 0 !important; }
    .input i { font-style: normal; display: flex; align-items: center; width: 100%; height: 100%; border: 1px solid #333; padding-left: 1px; box-sizing: border-box; }
    .thumb { position: absolute; left: 100px; top: 214px; width: 4px; height: 9px; background: #c8c8c8; border: 1px solid #aaa; box-sizing: border-box; }
  </style>
  <pane-title>Properties</pane-title>
  <div class="type">
    <div class="pic"><svg width="17" height="17" viewBox="0 0 17 17"><rect x="1.500" y="1.500" width="10" height="12" fill="#e8e8e8" stroke="#777"/><rect x="5.500" y="4.500" width="10" height="12" fill="#f2f2f2" stroke="#777"/></svg></div>
    Floor Plan
    <span class="caret"></span>
  </div>
  <div class="sel">
    <div class="dd">Floor Plan: Level 1 ${arrow('down')}</div>
    <div class="et"><svg width="9" height="9" viewBox="0 0 9 9"><rect x=".5" y=".5" width="8" height="8" fill="#eee" stroke="#556"/><path d="M.5 4.500h8M4.500.5v8" stroke="#556"/></svg>Edit Type</div>
  </div>
  <div class="mid">
    <div class="grid"></div>
    <rvt-scroll before="3" size="345"></rvt-scroll>
  </div>
  <div class="thumb"></div>
`;
class PropsPalette extends HTMLElement {
  connectedCallback() {
    const root = this.attachShadow({ mode: 'open' });
    root.appendChild(propsTemplate.content.cloneNode(true));
    const esc = s => s.replace(/</g, '&lt;').replace(/>/g, '&gt;');
    root.querySelector('.grid').innerHTML = propRows.map(row => {
      const p = row.split('|');
      if (p[0] === 'h') return `<div class="r h"><span style="background:none;padding-left:1px">${p[1]}</span><svg width="5" height="5" viewBox="0 0 5 5"><path d="M.5 2.500l2-2 2 2M.5 4.500l2-2 2 2" fill="none" stroke="#333" stroke-width=".8"/></svg></div>`;
      const type = p.length === 3 ? p[0] : '';
      const label = p.length === 3 ? p[1] : p[0];
      const value = p.length === 3 ? p[2] : p[1];
      if (type === 'e') return `<div class="r"><span>${label}</span><span class="btn"><i>${esc(value)}</i></span></div>`;
      if (type === 'c') return `<div class="r"><span>${label}</span><span class="check"><i></i></span></div>`;
      if (type === 'i') return `<div class="r"><span>${label}</span><span class="input"><i>${value}</i></span></div>`;
      return `<div class="r ${type}"><span style="white-space:pre">${label}</span><span>${value}</span></div>`;
    }).join('');
  }
}
customElements.define('props-palette', PropsPalette);

const statusTemplate = document.createElement('template');
statusTemplate.innerHTML = `
  <style>
    :host { display: flex; align-items: center; height: 13px; background: #cfcfcf; flex: none; padding-left: 1px; white-space: nowrap; color: #333; }
    .msg { width: 464px; flex: none; font-size: 5.850px; }
    .box { height: 9px; background: #e0e0e0; display: flex; align-items: center; justify-content: space-between; box-sizing: border-box; padding: 0 2px; flex: none; }
    .num { margin-left: 5px; flex: none; }
    .tail { display: flex; gap: 2px; margin-left: 158px; align-items: center; flex: none; }
    .tail i { display: block; width: 8px; height: 8px; }
  </style>
  <span class="msg">Click to select, TAB for alternates, CTRL adds, SHIFT unselects.</span>
  <svg width="10" height="9" viewBox="0 0 10 9"><path d="M1 4l3 3 5-6" fill="none" stroke="#3a8a4a" stroke-width="1.400"/></svg>
  <div class="box" style="width:82px;margin-left:3px">${arrow('down')}</div>
  <span class="num">:0</span>
  <div class="box" style="width:70px;margin-left:66px">Main Model</div>
  <div class="tail">
    <i style="background:#d8a030"></i><i style="background:#5a80c0"></i><i style="background:#c87a30"></i><i style="background:#5a80c0"></i><i style="background:#888"></i><i style="background:#aaa"></i><i style="background:#888"></i><i style="background:#999"></i>
  </div>
`;
class StatusBar extends HTMLElement {
  connectedCallback() {
    this.attachShadow({ mode: 'open' }).appendChild(statusTemplate.content.cloneNode(true));
  }
}
customElements.define('status-bar', StatusBar);

const taskTemplate = document.createElement('template');
taskTemplate.innerHTML = `
  <style>
    :host { display: flex; align-items: stretch; height: 16px; background: #191b26; flex: none; color: #e8e8e8; font-size: 6.300px; }
    .i { display: flex; align-items: center; justify-content: center; flex: none; box-sizing: border-box; }
    .u { border-bottom: 1px solid #76b9ed; }
    .rv { background: #3b3d48; font: bold 9px "Liberation Sans", sans-serif; color: #5a9be0; }
    .right { margin-left: auto; display: flex; padding-right: 6px; }
  </style>
  <div class="i" style="width:19px"><svg width="9" height="9" viewBox="0 0 9 9"><path d="M0 1l4-.5V4H0zM4.500.4L9 0v4H4.500zM0 4.500h4V8L0 7.600zM4.500 4.500H9V9l-4.500-.6z" fill="#fff"/></svg></div>
  <div class="i" style="width:18px"><svg width="9" height="9" viewBox="0 0 9 9"><circle cx="5.500" cy="3.500" r="2.800" fill="none" stroke="#eee"/><path d="M3.500 5.500L.5 8.500" stroke="#eee"/></svg></div>
  <div class="i" style="width:19px"><svg width="9" height="9" viewBox="0 0 9 9"><rect x="2" y="2" width="5" height="5" fill="none" stroke="#eee"/><path d="M0 1.500v6M9 1.500v6M2 .5h5M2 8.500h5" stroke="#aaa"/></svg></div>
  <div class="i u" style="width:20px"><svg width="10" height="9" viewBox="0 0 10 9"><path d="M0 1h4l1 1h5v6H0z" fill="#f2c84a"/><rect x="1" y="4" width="8" height="2" fill="#4a9ad8"/></svg></div>
  <div class="i u" style="width:19px"><svg width="9" height="9" viewBox="0 0 9 9"><circle cx="4.500" cy="4.500" r="4.500" fill="#e0453a"/><path d="M4.500 4.500L.5 6.500A4.500 4.500 0 0 0 5 9z" fill="#3aa655"/><path d="M4.500 4.500L5 9A4.500 4.500 0 0 0 8.700 3z" fill="#f6c02c"/><circle cx="4.500" cy="4.500" r="2" fill="#4a90e0" stroke="#fff" stroke-width=".6"/></svg></div>
  <div class="i u" style="width:19px"><svg width="10" height="10" viewBox="0 0 10 10"><rect width="10" height="10" fill="#1a78d0"/><circle cx="5" cy="5" r="3" fill="#3cc060"/></svg></div>
  <div class="i u rv" style="width:20px">R</div>
  <div class="right">
    <div class="i" style="width:16px"><svg width="9" height="9" viewBox="0 0 9 9"><circle cx="3" cy="4" r="1.500" fill="none" stroke="#ddd" stroke-width=".8"/><circle cx="6" cy="2" r="1.300" fill="none" stroke="#ddd" stroke-width=".8"/><path d="M.5 8.500c0-3 5-3 5 0M6 4.500c2 0 2.500 1 2.500 2.500" fill="none" stroke="#ddd" stroke-width=".8"/></svg></div>
    <div class="i" style="width:18px"><svg width="7" height="5" viewBox="0 0 7 5"><path d="M.5 4l3-3 3 3" fill="none" stroke="#ddd"/></svg></div>
    <div class="i" style="width:17px"><svg width="10" height="6" viewBox="0 0 10 6"><path d="M2 6a2 2 0 0 1-.3-4 3 3 0 0 1 5.600-.5A2.300 2.300 0 0 1 8 6z" fill="#1a78d0"/></svg></div>
    <div class="i" style="width:16px"><svg width="10" height="9" viewBox="0 0 10 9"><circle cx="4" cy="4" r="3.500" fill="#999"/><circle cx="7.500" cy="6.500" r="2.300" fill="#3a90d8"/></svg></div>
    <div class="i" style="width:15px"><svg width="8" height="8" viewBox="0 0 8 8"><path d="M0 8L8 0v8z" fill="#555"/><path d="M2 8l4-4v4z" fill="#999"/></svg></div>
    <div class="i" style="width:18px"><svg width="10" height="8" viewBox="0 0 10 8"><path d="M0 3h2l2-2v6L2 5H0z" fill="none" stroke="#ddd" stroke-width=".8"/><path d="M6 2.500a2 2 0 0 1 0 3M7.500 1a4 4 0 0 1 0 6" fill="none" stroke="#ddd" stroke-width=".8"/></svg></div>
    <div class="i" style="width:16px"><svg width="10" height="7" viewBox="0 0 10 7"><path d="M2 7a2 2 0 0 1-.3-4 3 3 0 0 1 5.600-.5A2.300 2.300 0 0 1 8 7z" fill="#eee"/><path d="M5 6V3M3.500 4.500L5 3l1.500 1.500" fill="none" stroke="#222" stroke-width=".8"/></svg></div>
    <div class="i" style="width:17px"><svg width="9" height="9" viewBox="0 0 9 9"><path d="M1 8l5-6 2 1-5 6z" fill="none" stroke="#ddd" stroke-width=".9"/><circle cx="2" cy="3" r="1" fill="#ddd"/></svg></div>
    <div class="i" style="width:19px">ENG</div>
    <div class="i" style="width:20px">21:01</div>
    <div class="i" style="width:22px"><svg width="9" height="9" viewBox="0 0 9 9"><path d="M.5.5h8v6H4L2 8.500v-2H.5z" fill="#eee"/></svg></div>
  </div>
`;
class TaskBar extends HTMLElement {
  connectedCallback() {
    this.attachShadow({ mode: 'open' }).appendChild(taskTemplate.content.cloneNode(true));
  }
}
customElements.define('task-bar', TaskBar);

const toastTemplate = document.createElement('template');
toastTemplate.innerHTML = `
  <style>
    :host { position: absolute; left: 801px; top: 476px; width: 189px; height: 64px; box-sizing: border-box; background: #333436; border: 1px solid #4a4a4a; display: flex; color: #a8a8a8; font-size: 8.400px; line-height: 11px; }
    .pic { width: 42px; flex: none; display: flex; align-items: center; justify-content: center; padding-bottom: 6px; }
    .text { padding-top: 10px; }
    .head { color: #f2f2f2; font-weight: bold; display: block; font-size: 8.200px; }
    .app { display: block; margin-top: 5px; font-size: 6.400px; color: #9a9a9a; }
  </style>
  <div class="pic">
    <svg width="26" height="16" viewBox="0 0 26 16"><path d="M9 4.500a6 6 0 0 1 10.500 1.500L14 9z" fill="#8f8f8f"/><path d="M5 15a4.500 4.500 0 0 1-.5-9 6 6 0 0 1 5-1.500l4 5L8 15z" fill="#b5b5b5"/><path d="M7 15l6-6 6-3a4.500 4.500 0 0 1 3 9z" fill="#f4f4f4"/></svg>
  </div>
  <div class="text">
    <span class="head"><slot name="head"></slot></span>
    <slot></slot>
    <span class="app"><slot name="app"></slot></span>
  </div>
`;
class ToastNote extends HTMLElement {
  connectedCallback() {
    this.attachShadow({ mode: 'open' }).appendChild(toastTemplate.content.cloneNode(true));
  }
}
customElements.define('toast-note', ToastNote);
</script>
</body>
</html>
